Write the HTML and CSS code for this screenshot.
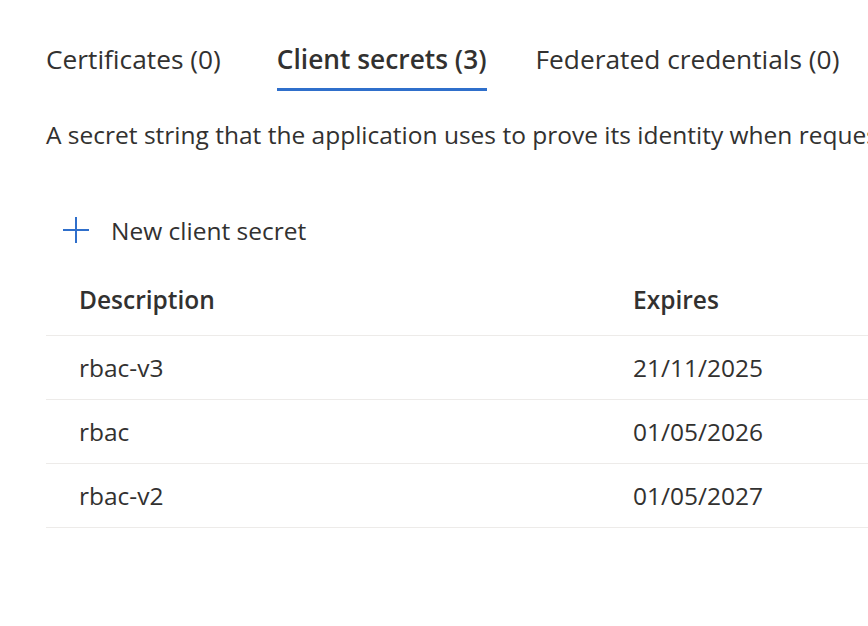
FILE: index.html
```html
<!DOCTYPE html>
<html>
<head>
<meta charset="utf-8">
<link rel="stylesheet" href="styles.css">
</head>
<body>
<div class="page">
  <div class="tabs">
    <div class="tab">Certificates (0)</div>
    <div class="tab active">Client secrets (3)</div>
    <div class="tab">Federated credentials (0)</div>
  </div>
  <p class="desc">A secret string that the application uses to prove its identity when requesting a token.</p>
  <button class="newbtn">
    <svg class="plus" width="26" height="26" viewBox="0 0 26 26"><path d="M13 0V26M0 13H26" stroke="#2f6fcb" stroke-width="2" fill="none"/></svg>
    <span>New client secret</span>
  </button>
  <div class="table">
    <div class="row head"><div class="c1">Description</div><div class="c2">Expires</div></div>
    <div class="row"><div class="c1">rbac-v3</div><div class="c2">21/11/2025</div></div>
    <div class="row"><div class="c1">rbac</div><div class="c2">01/05/2026</div></div>
    <div class="row"><div class="c1">rbac-v2</div><div class="c2">01/05/2027</div></div>
  </div>
</div>
</body>
</html>
```
FILE: styles.css
```css
html, body { margin: 0; padding: 0; background: #fff; overflow: hidden; }
body { font-family: "Open Sans", "Noto Sans", sans-serif; color: #323130; font-size: 24.5px; }
.page { padding: 40px 0 0 46px; width: 1400px; }
.tabs { display: flex; height: 51px; font-size: 26.3px; }
.tab { height: 48px; line-height: 38px; margin-right: 56px; border-bottom: 3px solid transparent; white-space: nowrap; }
.tab.active { font-weight: 600; border-bottom-color: #2f6fcb; margin-right: 49px; }
.desc { margin: 26px 0 0 0; white-space: nowrap; line-height: 36px; }
.newbtn { display: flex; align-items: center; gap: 22px; border: 0; background: none; padding: 0 0 0 17px; margin-top: 61px; font: inherit; color: inherit; height: 32px; }
.plus { display: block; }
.table { margin-top: 17px; width: 822px; }
.row { display: flex; height: 63px; align-items: center; border-bottom: 1px solid #edebe9; }
.row.head { height: 72px; font-weight: 600; }
.c1 { width: 554px; padding-left: 33px; flex-shrink: 0; }
.c2 { white-space: nowrap; }
```
